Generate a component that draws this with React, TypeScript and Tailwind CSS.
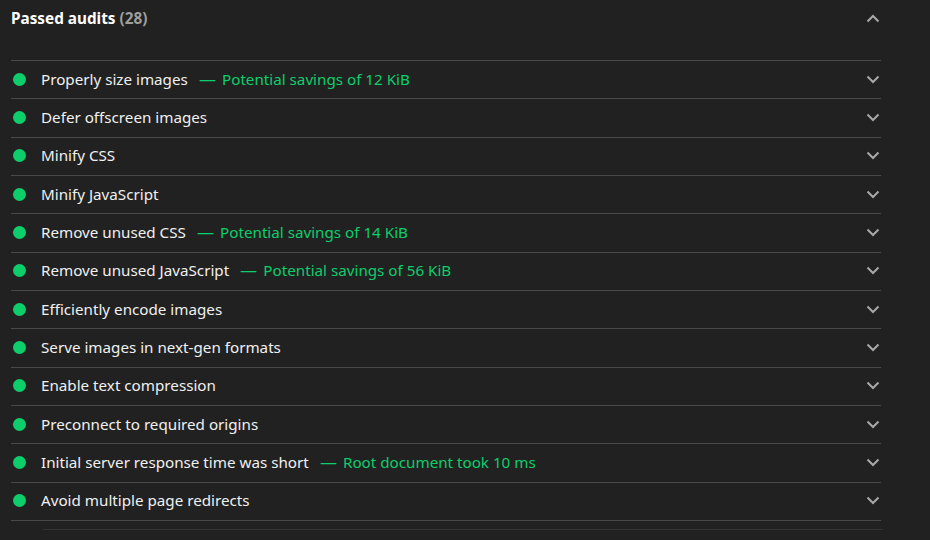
const audits: { title: string; detail?: string }[] = [
  { title: 'Properly size images', detail: 'Potential savings of 12 KiB' },
  { title: 'Defer offscreen images' },
  { title: 'Minify CSS' },
  { title: 'Minify JavaScript' },
  { title: 'Remove unused CSS', detail: 'Potential savings of 14 KiB' },
  { title: 'Remove unused JavaScript', detail: 'Potential savings of 56 KiB' },
  { title: 'Efficiently encode images' },
  { title: 'Serve images in next-gen formats' },
  { title: 'Enable text compression' },
  { title: 'Preconnect to required origins' },
  { title: 'Initial server response time was short', detail: 'Root document took 10 ms' },
  { title: 'Avoid multiple page redirects' },
];

function Chevron({ up = false }: { up?: boolean }) {
  return (
    <svg width="14" height="9" viewBox="0 0 14 9" className="text-[#a8a8a8]">
      <polyline
        points={up ? '1.5,7.5 7,2 12.5,7.5' : '1.5,1.5 7,7 12.5,1.5'}
        fill="none"
        stroke="currentColor"
        strokeWidth="2"
      />
    </svg>
  );
}

export default function App() {
  return (
    <div
      className="w-[930px] h-[540px] bg-[#212121] text-[#f0f0f0] overflow-hidden"
      style={{ fontFamily: '"Noto Sans", "Open Sans", sans-serif' }}
    >
      {/* header */}
      <div className="flex items-center justify-between pl-[11px] pr-[50px] h-[36px]">
        <h2 className="text-[15.3px] font-bold text-white">
          Passed audits <span className="text-[#9e9e9e]">(28)</span>
        </h2>
        <Chevron up />
      </div>

      {/* list */}
      <div className="mt-[24px] ml-[11px] w-[870px] border-t border-[#4a4a4a]">
        {audits.map((a, i) => (
          <div
            key={i}
            className="flex items-center h-[38.33px] border-b border-[#4a4a4a] pr-[1px] pb-[1px]"
          >
            <span className="w-[13px] h-[13px] rounded-full bg-[#0cce6b] ml-[2px] mr-[15px] shrink-0" />
            <span className="text-[15.2px] whitespace-nowrap">{a.title}</span>
            {a.detail && (
              <span className="text-[15.2px] text-[#0cce6b] whitespace-nowrap ml-[11px] flex">
                <span className="scale-x-[1.12] origin-left mr-[8px]">—</span>
                <span>{a.detail}</span>
              </span>
            )}
            <span className="ml-auto">
              <Chevron />
            </span>
          </div>
        ))}
      </div>
      <div className="mt-[8px] ml-[43px] w-[840px] border-t border-[#333333]" />
    </div>
  );
}
